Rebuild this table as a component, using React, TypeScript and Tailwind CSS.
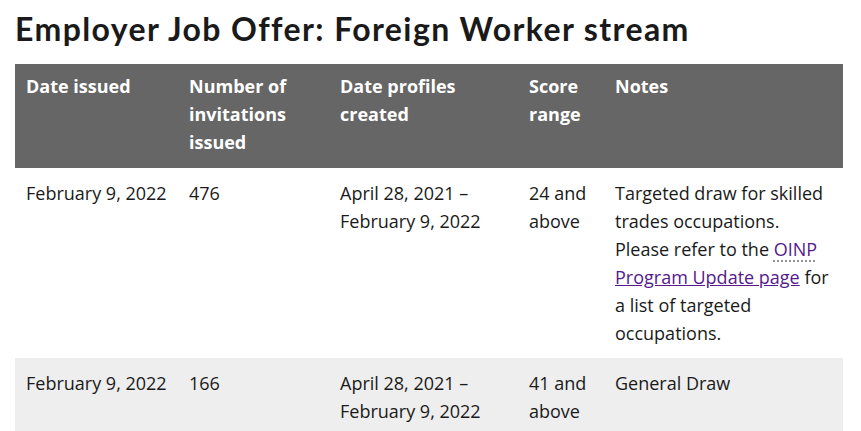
import React from 'react';

const rows = [
  {
    issued: 'February 9, 2022',
    count: '476',
    created: ['April 28, 2021 –', 'February 9, 2022'],
    score: '24 and above',
    notes: 'targeted',
  },
  {
    issued: 'February 9, 2022',
    count: '166',
    created: ['April 28, 2021 –', 'February 9, 2022'],
    score: '41 and above',
    notes: 'General Draw',
  },
];

export default function App() {
  return (
    <div className="bg-white px-[15px] pt-[9px] text-[#1a1a1a]" style={{ fontFamily: '"Open Sans", sans-serif' }}>
      <h1
        className="text-[32px] leading-[40px] font-bold tracking-[1.4px] text-[#1a1a1a]"
        style={{ fontFamily: 'Lato, sans-serif' }}
      >
        Employer Job Offer: Foreign Worker stream
      </h1>

      <table className="mt-[15px] w-[828px] table-fixed border-collapse text-[18px] leading-[28px]">
        <colgroup>
          <col className="w-[163px]" />
          <col className="w-[151px]" />
          <col className="w-[189px]" />
          <col className="w-[86px]" />
          <col className="w-[239px]" />
        </colgroup>
        <thead>
          <tr className="bg-[#666666] text-white">
            <th className="px-[11px] pt-[8px] pb-[12px] text-left align-top font-bold">Date issued</th>
            <th className="px-[11px] pt-[8px] pb-[12px] text-left align-top font-bold">Number of invitations issued</th>
            <th className="px-[11px] pt-[8px] pb-[12px] text-left align-top font-bold">Date profiles created</th>
            <th className="px-[11px] pt-[8px] pb-[12px] text-left align-top font-bold">Score range</th>
            <th className="px-[11px] pt-[8px] pb-[12px] text-left align-top font-bold">Notes</th>
          </tr>
        </thead>
        <tbody>
          {rows.map((r, i) => (
            <tr key={i} className={i % 2 === 1 ? 'bg-[#eeeeee]' : 'bg-white'}>
              <td className="px-[11px] pt-[11px] pb-[11px] align-top">{r.issued}</td>
              <td className="px-[11px] pt-[11px] pb-[11px] align-top">{r.count}</td>
              <td className="px-[11px] pt-[11px] pb-[11px] align-top">
                {r.created[0]}
                <br />
                {r.created[1]}
              </td>
              <td className="px-[11px] pt-[11px] pb-[11px] align-top">{r.score}</td>
              <td className="px-[11px] pt-[11px] pb-[11px] align-top">
                {r.notes === 'targeted' ? (
                  <>
                    Targeted draw for skilled trades occupations. Please refer to the{' '}
                    <a href="#" className="text-[#551a8b] no-underline">
                      <abbr
                        title="Ontario Immigrant Nominee Program"
                        className="underline decoration-dotted decoration-[#888888] underline-offset-[5px]"
                      >
                        OINP
                      </abbr>{' '}
                      <span className="underline">Program Update page</span>
                    </a>{' '}
                    for a list of targeted occupations.
                  </>
                ) : (
                  r.notes
                )}
              </td>
            </tr>
          ))}
        </tbody>
      </table>
    </div>
  );
}
